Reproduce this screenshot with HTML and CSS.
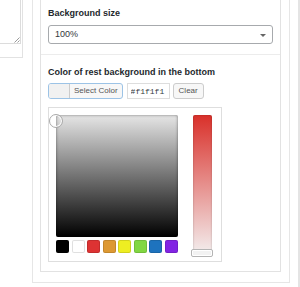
FILE: index.html
```html
<!DOCTYPE html>
<html lang="en">
<head>
  <meta charset="UTF-8" />
  <meta name="viewport" content="width=device-width, initial-scale=1.0" />
  <title>Background settings</title>
  <link rel="stylesheet" href="styles.css">
</head>
<body>
  <div class="page">
    <aside class="side">
      <div class="side-card">
        <div class="textarea">
          <svg class="grip" width="7" height="7" viewBox="0 0 7 7">
            <path d="M6.5 1.5 L1.5 6.5 M6.5 4.5 L4.5 6.5" stroke="#999" stroke-width="1" fill="none" />
          </svg>
        </div>
      </div>
    </aside>

    <div class="wrap">
      <div class="panel">
        <section class="field first">
          <h4>Background size</h4>
          <div class="select">100%<span class="caret"></span></div>
        </section>

        <section class="field">
          <h4>Color of rest background in the bottom</h4>
          <div class="color-row">
            <button class="color-btn"><span class="preview"></span><span class="label">Select Color</span></button>
            <input class="hex" type="text" value="#f1f1f1">
            <button class="clear">Clear</button>
          </div>

          <!-- iris style picker -->
          <div class="picker">
            <div class="picker-main">
              <div class="square"><span class="ring"></span></div>
              <div class="palette">
                <a style="background:#000000"></a>
                <a style="background:#ffffff"></a>
                <a style="background:#dd3333"></a>
                <a style="background:#dd9933"></a>
                <a style="background:#eeee22"></a>
                <a style="background:#81d742"></a>
                <a style="background:#1e73be"></a>
                <a style="background:#8224e3"></a>
              </div>
            </div>
            <div class="strip"><span class="strip-handle"></span></div>
          </div>
        </section>
      </div>
    </div>

    <div class="next"></div>
  </div>
</body>
</html>
```

FILE: styles.css
```css
body {
  margin: 0;
  background: #fff;
  font-family: "Liberation Sans", Arial, sans-serif;
  color: #23282d;
}
.page {
  display: flex;
  align-items: flex-start;
  width: 300px;
  height: 287px;
  overflow: hidden;
}
.side {
  width: 23px;
  flex: none;
}
.side-card {
  height: 57px;
  border-right: 1px solid #e2e2e2;
  border-bottom: 1px solid #e2e2e2;
}
.textarea {
  position: relative;
  width: 20px;
  height: 43px;
  border-right: 1px solid #dcdcdc;
  border-bottom: 1px solid #dcdcdc;
}
.grip {
  position: absolute;
  right: 0;
  bottom: 0;
}
.wrap {
  flex: none;
  width: 241px;
  height: 273px;
  margin-left: 9px;
  padding: 0 8px 9px 7px;
  border-left: 1px solid #e6e6e6;
  border-right: 1px solid #e6e6e6;
  border-bottom: 1px solid #e6e6e6;
}
.panel {
  height: 271px;
  border-left: 1px solid #e2e2e2;
  border-right: 1px solid #e2e2e2;
  border-bottom: 1px solid #e2e2e2;
}
.field {
  padding: 11px 7px 0 7px;
}
.field.first {
  padding-top: 7px;
  padding-bottom: 10px;
  border-bottom: 1px solid #ececec;
}
h4 {
  margin: 0 0 5px;
  font-size: 9px;
  line-height: 12px;
  font-weight: bold;
  color: #23282d;
}
.first h4 {
  margin-bottom: 6px;
}
.select {
  position: relative;
  height: 17px;
  padding-left: 6px;
  border: 1px solid #a7aaad;
  border-radius: 3px;
  font-size: 9px;
  line-height: 17px;
  color: #32373c;
}
.caret {
  position: absolute;
  right: 6px;
  top: 8px;
  border-left: 3px solid transparent;
  border-right: 3px solid transparent;
  border-top: 3px solid #666;
}
.color-row {
  display: flex;
  height: 16px;
}
.color-btn {
  display: flex;
  height: 16px;
  padding: 0;
  border: 1px solid #9cc3e6;
  border-radius: 3px;
  overflow: hidden;
  background: #f7f7f7;
  font-family: inherit;
}
.preview {
  width: 20px;
  height: 14px;
  background: #f1f1f1;
  border-right: 1px solid #ccc;
}
.label {
  padding: 0 4px;
  font-size: 8px;
  line-height: 14px;
  color: #555;
}
.hex {
  width: 43px;
  height: 16px;
  margin-left: 4px;
  padding: 0 3px;
  box-sizing: border-box;
  border: 1px solid #ddd;
  font-family: "Liberation Mono", monospace;
  font-size: 8px;
  color: #32373c;
}
.clear {
  height: 16px;
  margin-left: 3px;
  padding: 0 5px;
  border: 1px solid #ccc;
  border-radius: 3px;
  background: #f7f7f7;
  font-family: inherit;
  font-size: 8px;
  line-height: 14px;
  color: #555;
}
.picker {
  display: flex;
  width: fit-content;
  margin-top: 8px;
  padding: 7px 9px 8px 7px;
  border: 1px solid #dedede;
  background: #fff;
}
.square {
  position: relative;
  width: 122px;
  height: 122px;
  border-radius: 2px;
  background: linear-gradient(to bottom, #e6e6e6, #000);
  box-shadow: inset 0 0 3px rgba(0,0,0,0.5);
}
.ring {
  position: absolute;
  left: -7px;
  top: -1px;
  width: 12px;
  height: 12px;
  border: 1px solid #aaa;
  border-radius: 50%;
  box-shadow: inset 0 0 0 1px #fff;
}
.palette {
  display: flex;
  justify-content: space-between;
  margin-top: 3px;
}
.palette a {
  width: 13px;
  height: 13px;
  border-radius: 2px;
  box-shadow: inset 0 0 0 1px rgba(0,0,0,0.12);
}
.strip {
  position: relative;
  width: 19px;
  height: 138px;
  margin-left: 15px;
  border-radius: 2px;
  background: linear-gradient(to bottom, #d9302a, #f3eded);
  box-shadow: inset 0 0 2px rgba(0,0,0,0.3);
}
.strip-handle {
  position: absolute;
  left: -2px;
  bottom: -4px;
  width: 20px;
  height: 6px;
  border: 1px solid #b4b4b4;
  border-radius: 2px;
  background: #f2f2f2;
  box-shadow: inset 0 0 0 1px #fff;
}
.next {
  flex: none;
  height: 287px;
  margin-left: 8px;
  border-left: 2px solid #e4e4e4;
}
```
